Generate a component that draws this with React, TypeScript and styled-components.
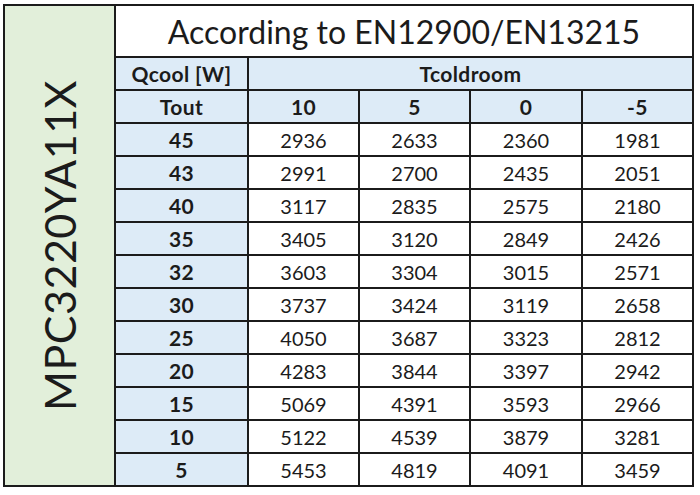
import React from "react";
import styled, { createGlobalStyle } from "styled-components";

const GlobalStyle = createGlobalStyle`
  html, body {
    margin: 0;
    padding: 0;
    background: #ffffff;
  }
  body {
    font-family: Lato, "Open Sans", sans-serif;
    color: #1b1b1b;
  }
`;

const tout = [45, 43, 40, 35, 32, 30, 25, 20, 15, 10, 5];
const tcold = [10, 5, 0, -5];
const values = [
  [2936, 2633, 2360, 1981],
  [2991, 2700, 2435, 2051],
  [3117, 2835, 2575, 2180],
  [3405, 3120, 2849, 2426],
  [3603, 3304, 3015, 2571],
  [3737, 3424, 3119, 2658],
  [4050, 3687, 3323, 2812],
  [4283, 3844, 3397, 2942],
  [5069, 4391, 3593, 2966],
  [5122, 4539, 3879, 3281],
  [5453, 4819, 4091, 3459],
];

const App = () => {
  return (
    <>
      <GlobalStyle />
      <Page>
        <Sheet>
          <colgroup>
            <col style={{ width: 111 }} />
            <col style={{ width: 133 }} />
            <col style={{ width: 111 }} />
            <col style={{ width: 111 }} />
            <col style={{ width: 112 }} />
            <col style={{ width: 111 }} />
          </colgroup>
          <tbody>
            <tr>
              <ModelCell rowSpan={14}>
                <ModelName>MPC3220YA11X</ModelName>
              </ModelCell>
              <TitleCell colSpan={5}>According to EN12900/EN13215</TitleCell>
            </tr>
            <Row>
              <HeadCell>Qcool [W]</HeadCell>
              <HeadCell colSpan={4}>Tcoldroom</HeadCell>
            </Row>
            <Row>
              <HeadCell>Tout</HeadCell>
              {tcold.map((t) => (
                <HeadCell key={t}>{t}</HeadCell>
              ))}
            </Row>
            {tout.map((t, i) => (
              <Row key={t}>
                <HeadCell>{t}</HeadCell>
                {values[i].map((v, j) => (
                  <ValueCell key={j}>{v}</ValueCell>
                ))}
              </Row>
            ))}
          </tbody>
        </Sheet>
      </Page>
    </>
  );
};

const Page = styled.div`
  padding: 4px 0 0 3px;
`;

const Sheet = styled.table`
  border-collapse: collapse;
  table-layout: fixed;
  width: 691px;
  border: 2px solid #1b1b1b;

  td {
    border: 2px solid #1b1b1b;
    padding: 0;
    text-align: center;
    vertical-align: middle;
  }
`;

const Row = styled.tr`
  height: 33px;
`;

const ModelCell = styled.td`
  background: #e2efda;
`;

const ModelName = styled.div`
  writing-mode: vertical-rl;
  transform: rotate(180deg);
  margin: 0 auto;
  font-size: 43px;
  line-height: 1;
  letter-spacing: 0.5px;
`;

const TitleCell = styled.td`
  height: 50px;
  font-size: 32px;
  background: #ffffff;
`;

const HeadCell = styled.td`
  background: #ddebf7;
  font-weight: 700;
  font-size: 21px;
  letter-spacing: 0.4px;
`;

const ValueCell = styled.td`
  background: #ffffff;
  font-size: 20px;
`;

export default App;
